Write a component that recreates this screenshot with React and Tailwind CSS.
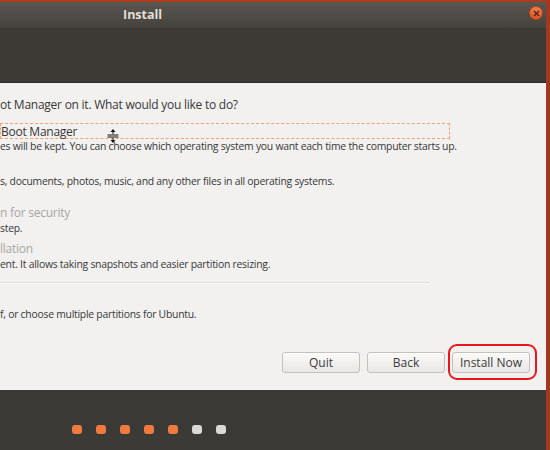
import React from 'react';

const font = { fontFamily: '"Open Sans", "DejaVu Sans", sans-serif' };

const Dot = ({ done }) => (
    <div className={`w-[10px] h-[9px] rounded-[3px] ${done ? 'bg-[#f07a3c]' : 'bg-[#dcd9d4]'}`}></div>
);

const Button = ({ children }) => (
    <button className="w-[78px] h-[21px] rounded-[3px] border border-[#c4c1bb] bg-gradient-to-b from-[#fbfafa] to-[#e9e7e4] text-[12px] text-[#3c3c3c] leading-none shadow-[inset_0_1px_0_#fff]">
        {children}
    </button>
);

const App = () => {
    return (
        <div className="w-[550px] h-[450px] flex overflow-hidden bg-[#3c3a36]" style={font}>
            <div className="w-[546px] flex flex-col">
                {/* title bar */}
                <div className="h-[2px] bg-[#b13a1e]"></div>
                <div className="h-[26px] relative bg-gradient-to-b from-[#5a5751] to-[#45423d] flex items-center">
                    <span className="ml-[123px] text-[12.5px] font-bold text-[#e2ded6]">Install</span>
                    <div className="absolute left-[529px] top-[4px] w-[14px] h-[14px] rounded-full bg-gradient-to-b from-[#f47a4a] to-[#e0561f] border border-[#b8441a] flex items-center justify-center">
                        <svg width="7" height="7" viewBox="0 0 7 7">
                            <path d="M1 1 L6 6 M6 1 L1 6" stroke="#4a2616" strokeWidth="1.4" />
                        </svg>
                    </div>
                </div>
                <div className="h-[54px] bg-[#3d3a36]"></div>
                <div className="h-px bg-[#2b2a27]"></div>

                {/* content */}
                <div className="h-[307px] bg-[#f2f1f0] relative flex flex-col text-[#383838]">
                    <div className="mt-[14px] h-[16px] leading-[16px] text-[12px] tracking-[-0.25px]">ot Manager on it. What would you like to do?</div>
                    <div className="mt-[10px] w-[450px] h-[16px] border border-dashed border-[#f0a07a] flex items-center text-[12px] tracking-[-0.25px] leading-none pt-px">
                        Boot Manager
                    </div>
                    <div className="h-[14px] leading-[14px] text-[10.4px] tracking-[-0.25px]">es will be kept. You can choose which operating system you want each time the computer starts up.</div>
                    <div className="mt-[21px] h-[14px] leading-[14px] text-[10.4px] tracking-[-0.25px]">s, documents, photos, music, and any other files in all operating systems.</div>
                    <div className="mt-[17px] h-[16px] leading-[16px] text-[12px] tracking-[-0.25px] text-[#a8a6a2]">n for security</div>
                    <div className="h-[14px] leading-[14px] text-[10.4px] tracking-[-0.25px]">step.</div>
                    <div className="mt-[6px] h-[16px] leading-[16px] text-[12px] tracking-[-0.25px] text-[#a8a6a2]">llation</div>
                    <div className="h-[14px] leading-[14px] text-[10.4px] tracking-[-0.25px]">ent. It allows taking snapshots and easier partition resizing.</div>
                    <div className="mt-[11px] w-[430px] h-[2px] bg-[#dedcd9] border-b border-[#fbfafa]"></div>
                    <div className="mt-[23px] h-[14px] leading-[14px] text-[10.4px] tracking-[-0.25px]">f, or choose multiple partitions for Ubuntu.</div>

                    <div className="mt-[31px] ml-[282px] flex items-start gap-[7px]">
                        <Button>Quit</Button>
                        <Button>Back</Button>
                        <div className="relative flex">
                            <Button>Install Now</Button>
                            <div className="absolute -left-[4px] -top-[8px] w-[89px] h-[36px] rounded-[9px] border-2 border-[#e8161e]"></div>
                        </div>
                    </div>

                    {/* resize cursor */}
                    <svg className="absolute left-[107px] top-[46px]" width="12" height="14" viewBox="0 0 12 14">
                        <path d="M6 0 L8.5 3 L3.5 3 Z M6 14 L8.5 11 L3.5 11 Z" fill="#111" />
                        <path d="M6 2 V5 M6 9 V12 M0.5 6 H11.5 M0.5 8 H11.5" stroke="#111" strokeWidth="1" />
                    </svg>
                </div>

                {/* footer */}
                <div className="flex-1 bg-[#3c3a36] flex items-start">
                    <div className="mt-[35px] ml-[72px] flex gap-[14px]">
                        <Dot done />
                        <Dot done />
                        <Dot done />
                        <Dot done />
                        <Dot done />
                        <Dot />
                        <Dot />
                    </div>
                </div>
            </div>
            <div className="w-[4px] bg-[#9e3a20]"></div>
        </div>
    );
};

export default App;
